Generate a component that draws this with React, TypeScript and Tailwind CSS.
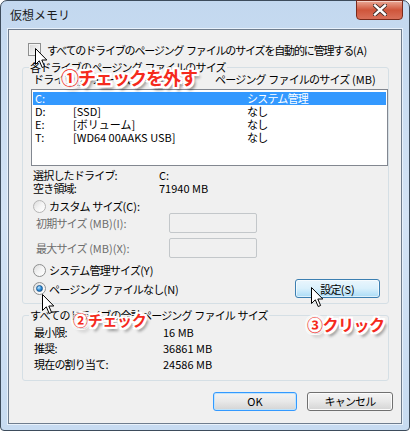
import React from 'react';

const drives = [
  { d: 'C:', label: '', size: 'システム管理', selected: true },
  { d: 'D:', label: '[SSD]', size: 'なし' },
  { d: 'E:', label: '[ボリューム]', size: 'なし' },
  { d: 'T:', label: '[WD64 00AAKS USB]', size: 'なし' },
];

function Cursor({ className }: { className: string }) {
  return (
    <svg className={`absolute ${className}`} width="13" height="21" viewBox="0 0 13 21">
      <path
        d="M0.5 0.5 L0.5 16.5 L4.3 12.8 L7.2 19.5 L9.6 18.5 L6.8 12 L11.8 12 Z"
        fill="#fff"
        stroke="#000"
        strokeWidth="1"
      />
    </svg>
  );
}

function Radio({ checked, disabled }: { checked?: boolean; disabled?: boolean }) {
  return (
    <span
      className={`flex w-[13px] h-[13px] shrink-0 items-center justify-center rounded-full border ${
        disabled ? 'border-[#b5b5b5]' : 'border-[#8e8f8f]'
      } bg-linear-to-br from-[#dcdcdc] via-[#f4f4f4] to-white`}
    >
      {checked && (
        <span className="w-[7px] h-[7px] rounded-full border border-[#1b5a92] bg-[radial-gradient(circle_at_35%_30%,#bfe6ff,#2a8ad8_55%,#0d4d8a)]" />
      )}
    </span>
  );
}

function Group({ title, children, className }: { title: React.ReactNode; children: React.ReactNode; className: string }) {
  return (
    <div className={`relative ml-[13px] w-[367px] rounded-[3px] border border-[#d5dfe5] ${className}`}>
      <span className="absolute -top-[8px] left-[6px] bg-[#f0f0f0] px-px leading-[14px]">{title}</span>
      {children}
    </div>
  );
}

// space with normal width inside tightly tracked Japanese text
const Sp = () => <span className="tracking-[0px]"> </span>;

const annot =
  "absolute font-bold text-[#f52a1c] leading-none whitespace-nowrap [text-shadow:2px_0_0_#fff,-2px_0_0_#fff,0_2px_0_#fff,0_-2px_0_#fff,2px_2px_0_#fff,-2px_-2px_0_#fff,2px_-2px_0_#fff,-2px_2px_0_#fff,3px_4px_3px_rgba(0,0,0,0.45)]";

export default function App() {
  return (
    <div className="relative w-[410px] h-[431px] overflow-hidden bg-white font-['Noto_Sans_CJK_JP',sans-serif] text-[11px] tracking-[-0.8px] text-black">
      <div className="flex h-full flex-col rounded-t-[7px] rounded-b-[4px] border border-[#3d4c5c] bg-linear-to-b from-[#c3d8ef] via-[#d3e3f5] to-[#c7dbf1] px-[7px] pb-[6px]">
        {/* title bar */}
        <div className="flex h-[28px] shrink-0 items-start justify-between">
          <span className="pl-[2px] pt-[6px] text-[12px] leading-[16px] tracking-[0px] text-[#1a1a1a]">仮想メモリ</span>
          <div className="-mt-px mr-[-1px] flex h-[20px] w-[47px] items-center justify-center rounded-b-[4px] border border-[#7a2a1b] bg-linear-to-b from-[#e9a795] via-[#cf553b] to-[#d9705a] shadow-[inset_0_1px_0_rgba(255,255,255,0.5)]">
            <svg width="14" height="12" viewBox="0 0 14 12">
              <path d="M2 1.5 L12 10.5 M12 1.5 L2 10.5" stroke="#3c2a28" strokeWidth="4.2" strokeLinecap="square" />
              <path d="M2 1.5 L12 10.5 M12 1.5 L2 10.5" stroke="#fff" strokeWidth="2.4" strokeLinecap="square" />
            </svg>
          </div>
        </div>

        {/* client area */}
        <div className="flex h-[395px] flex-col border border-[#6f7d8e] bg-[#f0f0f0] shadow-[0_0_0_1px_#e8f1fb]">
          <div className="mt-[13px] flex h-[13px] items-center pl-[19px]">
            <span className="h-[13px] w-[13px] border border-[#8e8f8f] bg-linear-to-br from-[#d4d4d4] via-[#ececec] to-[#fafafa] shadow-[inset_0_0_0_1px_#f4f4f4]" />
            <span className="ml-[6px] leading-[14px] tracking-[-1.15px]">
              すべてのドライブのページング<Sp />ファイルのサイズを自動的に管理する<span className="tracking-[0px]">(A)</span>
            </span>
          </div>

          <Group
            title={
              <>
                各ドライブのページング<Sp />ファイルのサイズ
              </>
            }
            className="mt-[11px] pb-[5px]"
          >
            <div className="mt-[4px] flex h-[14px] items-center leading-[14px]">
              <span className="w-[192px] shrink-0 pl-[10px]">
                ドライブ<Sp />[ボリューム<Sp />ラベル]
              </span>
              <span>
                ページング<Sp />ファイルのサイズ<Sp />
                <span className="tracking-[0px]">(MB)</span>
              </span>
            </div>
            <div className="mt-[3px] ml-[8px] h-[77px] w-[357px] border border-[#828790] bg-white px-px pt-[2px]">
              {drives.map((r) => (
                <div
                  key={r.d}
                  className={`flex h-[13px] items-center leading-[13px] ${r.selected ? 'bg-[#3399ff] text-white' : ''}`}
                >
                  <span className="w-[40px] shrink-0 pl-[2px] tracking-[0px]">{r.d}</span>
                  <span className="w-[174px] shrink-0 tracking-[0px]">{r.label}</span>
                  <span>{r.size}</span>
                </div>
              ))}
            </div>

            <div className="mt-[3px] flex h-[13px] items-center leading-[13px]">
              <span className="w-[136px] shrink-0 pl-[10px]">選択したドライブ:</span>
              <span className="tracking-[0px]">C:</span>
            </div>
            <div className="flex h-[13px] items-center leading-[13px]">
              <span className="w-[136px] shrink-0 pl-[10px]">空き領域:</span>
              <span className="tracking-[0px]">71940 MB</span>
            </div>

            <div className="mt-[4px] flex h-[14px] items-center pl-[10px] leading-[14px]">
              <Radio disabled />
              <span className="ml-[3px]">
                カスタム<Sp />サイズ<span className="tracking-[0px]">(C):</span>
              </span>
            </div>
            <div className="flex h-[20px] items-center text-[#6d6d6d]">
              <span className="w-[146px] shrink-0 pl-[13px]">
                初期サイズ<Sp />
                <span className="tracking-[0px]">(MB)(I):</span>
              </span>
              <span className="h-[20px] w-[88px] rounded-[2px] border border-[#c3c7ca] bg-[#f0f0f0]" />
            </div>
            <div className="mt-[5px] flex h-[20px] items-center text-[#6d6d6d]">
              <span className="w-[146px] shrink-0 pl-[13px]">
                最大サイズ<Sp />
                <span className="tracking-[0px]">(MB)(X):</span>
              </span>
              <span className="h-[20px] w-[88px] rounded-[2px] border border-[#c3c7ca] bg-[#f0f0f0]" />
            </div>

            <div className="mt-[5px] flex h-[14px] items-center pl-[10px] leading-[14px]">
              <Radio />
              <span className="ml-[3px]">
                システム管理サイズ<span className="tracking-[0px]">(Y)</span>
              </span>
            </div>
            <div className="mt-[2px] flex h-[19px] items-center pl-[10px] leading-[14px]">
              <Radio checked />
              <span className="ml-[3px]">
                ページング<Sp />ファイルなし<span className="tracking-[0px]">(N)</span>
              </span>
              <span className="ml-auto mr-[8px] flex h-[19px] w-[85px] items-center justify-center rounded-[3px] border border-[#3c7fb1] bg-linear-to-b from-[#eaf6fd] via-[#d9f0fc] to-[#a9dbf6] shadow-[inset_0_0_0_1px_rgba(255,255,255,0.6)]">
                設定<span className="tracking-[0px]">(S)</span>
              </span>
            </div>
          </Group>

          <Group
            title={
              <>
                すべてのドライブの合計ページング<Sp />ファイル<Sp />サイズ
              </>
            }
            className="mt-[11px] pt-[8px] pb-[8px]"
          >
            {[
              ['最小限:', '16 MB'],
              ['推奨:', '36861 MB'],
              ['現在の割り当て:', '24586 MB'],
            ].map(([k, v]) => (
              <div key={k} className="flex h-[16px] items-center leading-[16px]">
                <span className="w-[140px] shrink-0 pl-[11px]">{k}</span>
                <span className="tracking-[0px]">{v}</span>
              </div>
            ))}
          </Group>

          <div className="mt-[11px] flex justify-end gap-[10px] pr-[8px]">
            <span className="flex h-[19px] w-[84px] items-center justify-center rounded-[3px] border border-[#3399ff] bg-linear-to-b from-[#f4f4f4] via-[#e8e8e8] to-[#d4d4d4] tracking-[0px] shadow-[inset_0_0_0_1px_#bfe3fb]">
              OK
            </span>
            <span className="flex h-[19px] w-[86px] items-center justify-center rounded-[3px] border border-[#707070] bg-linear-to-b from-[#f4f4f4] via-[#e8e8e8] to-[#d4d4d4] shadow-[inset_0_0_0_1px_#fbfbfb]">
              キャンセル
            </span>
          </div>
        </div>
      </div>

      {/* annotations */}
      <span className={`${annot} left-[61px] top-[68px] text-[18px] tracking-[-1px]`}>①チェックを外す</span>
      <span className={`${annot} left-[73px] top-[312px] text-[15px] tracking-[-0.3px]`}>②チェック</span>
      <span className={`${annot} left-[307px] top-[316px] text-[16px] tracking-[-0.5px]`}>③クリック</span>

      <Cursor className="left-[35px] top-[48px]" />
      <Cursor className="left-[42px] top-[294px]" />
      <Cursor className="left-[311px] top-[287px]" />
    </div>
  );
}
